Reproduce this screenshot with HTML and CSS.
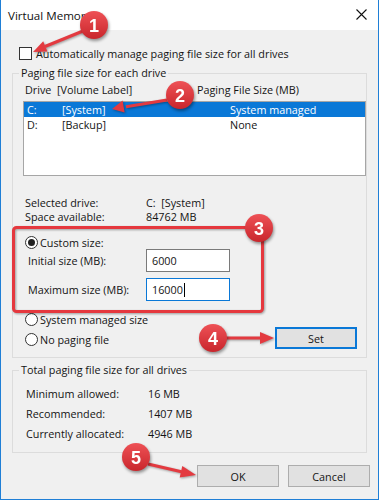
FILE: index.html
```html
<!DOCTYPE html>
<html>
<head>
<meta charset="utf-8">
<link rel="stylesheet" href="styles.css">
</head>
<body>
<div class="window">
  <div class="titlebar">
    <span class="title">Virtual Memory</span>
    <svg class="close" width="11" height="11" viewBox="0 0 11 11"><path d="M0.5 0.5 L10.5 10.5 M10.5 0.5 L0.5 10.5" stroke="#111" stroke-width="1.1" fill="none"/></svg>
  </div>
  <div class="client">
    <div class="check-row"><span class="checkbox"></span><span>Automatically manage paging file size for all drives</span></div>

    <fieldset class="group group-drives">
      <legend>Paging file size for each drive</legend>
      <div class="list-head"><span class="h-drive">Drive</span><span class="h-label">[Volume Label]</span><span>Paging File Size (MB)</span></div>
      <div class="listbox">
        <div class="row selected"><span class="c-drive">C:</span><span class="c-label">[System]</span><span>System managed</span></div>
        <div class="row"><span class="c-drive">D:</span><span class="c-label">[Backup]</span><span>None</span></div>
      </div>
      <div class="info">
        <div class="kv"><span class="k">Selected drive:</span><span>C:&nbsp; [System]</span></div>
        <div class="kv"><span class="k">Space available:</span><span>84762 MB</span></div>
      </div>
      <div class="radio-row custom"><span class="radio checked"></span><span>Custom size:</span></div>
      <div class="field-row"><span class="field-label">Initial size (MB):</span><div class="input">6000</div></div>
      <div class="field-row second"><span class="field-label">Maximum size (MB):</span><div class="input focused">16000<span class="caret"></span></div></div>
      <div class="bottom-row">
        <div class="radios">
          <div class="radio-row"><span class="radio"></span><span>System managed size</span></div>
          <div class="radio-row"><span class="radio"></span><span>No paging file</span></div>
        </div>
        <div class="btn btn-set">Set</div>
      </div>
    </fieldset>

    <fieldset class="group group-total">
      <legend>Total paging file size for all drives</legend>
      <div class="totals">
        <div class="trow"><span class="k">Minimum allowed:</span><span>16 MB</span></div>
        <div class="trow"><span class="k">Recommended:</span><span>1407 MB</span></div>
        <div class="trow"><span class="k">Currently allocated:</span><span>4946 MB</span></div>
      </div>
    </fieldset>

    <div class="buttons">
      <div class="btn">OK</div>
      <div class="btn">Cancel</div>
    </div>
  </div>

  <svg class="annotations" width="379" height="500" viewBox="0 0 379 500">
    <defs>
      <linearGradient id="bg" x1="0" y1="0" x2="0" y2="1">
        <stop offset="0" stop-color="#ee5156"/>
        <stop offset="1" stop-color="#c9262c"/>
      </linearGradient>
    </defs>
    <g class="marks">
      <rect x="13.5" y="227.5" width="249" height="84" rx="3" fill="none" stroke="#e5383e" stroke-width="3"/>
      <line x1="83" y1="31" x2="45" y2="46.5" stroke="#e33a40" stroke-width="3"/>
      <line x1="167" y1="100" x2="126" y2="106.8" stroke="#e33a40" stroke-width="3"/>
      <line x1="224" y1="338" x2="260" y2="338" stroke="#e33a40" stroke-width="3"/>
      <line x1="148" y1="464" x2="182.5" y2="472" stroke="#e33a40" stroke-width="3"/>
      <polygon points="33,52 43.2,41.3 47.4,51.5" fill="#e33a40"/>
      <polygon points="112,109 122.6,100.6 124.6,112.4" fill="#e33a40"/>
      <polygon points="274,338 260,332 260,344" fill="#e33a40"/>
      <polygon points="196,475 182.3,466 179.7,477.6" fill="#e33a40"/>
    </g>
    <g class="badges">
      <circle cx="94" cy="25" r="14" fill="url(#bg)"/>
      <text x="94" y="31.5" class="badge-num">1</text>
      <circle cx="180" cy="95" r="14" fill="url(#bg)"/>
      <text x="180" y="101.5" class="badge-num">2</text>
      <circle cx="259" cy="228" r="14" fill="url(#bg)"/>
      <text x="259" y="234.5" class="badge-num">3</text>
      <circle cx="213" cy="338" r="14" fill="url(#bg)"/>
      <text x="213" y="344.5" class="badge-num">4</text>
      <circle cx="136" cy="457" r="14" fill="url(#bg)"/>
      <text x="136" y="463.5" class="badge-num">5</text>
    </g>
  </svg>
</div>
</body>
</html>
```

FILE: styles.css
```css
html, body {
  margin: 0;
  padding: 0;
  background: #ffffff;
}

body {
  font-family: "Open Sans", "Noto Sans", sans-serif;
  font-size: 10.8px;
  color: #141414;
}

.window {
  position: relative;
  width: 379px;
  height: 500px;
  box-sizing: border-box;
  border: 1px solid #1f7fd6;
  border-top: none;
  background: #f0f0f0;
  overflow: hidden;
}

.titlebar {
  height: 30px;
  background: #ffffff;
  display: flex;
  align-items: center;
  justify-content: space-between;
  padding: 0 11px 0 7px;
}

.title {
  font-size: 11.6px;
  color: #111;
}

.close {
  display: block;
  margin-top: -1px;
}

.client {
  height: 469px;
  background: #f0f0f0;
  overflow: hidden;
}

.check-row {
  display: flex;
  align-items: center;
  height: 14px;
  margin-top: 16px;
  padding-left: 18px;
  gap: 4px;
  white-space: nowrap;
}

.checkbox {
  width: 11px;
  height: 11px;
  border: 1px solid #333;
  background: #fff;
  flex: none;
}

.group {
  margin: 0 11px 0 11px;
  padding: 0;
  border: 1px solid #dcdcdc;
  min-inline-size: 0;
}

.group legend {
  margin-left: 6px;
  padding: 0 2px;
  line-height: 14px;
  height: 14px;
}

.group-drives {
  margin-top: 6px;
  padding-bottom: 8px;
}

.list-head {
  display: flex;
  height: 14px;
  line-height: 14px;
  margin-top: 3px;
  padding-left: 12px;
  white-space: nowrap;
}

.h-drive { width: 32px; }
.h-label { width: 140px; }

.listbox {
  margin: 4px 0 0 10px;
  height: 75px;
  box-sizing: border-box;
  border: 1px solid #a6a6a6;
  background: #fff;
}

.row {
  display: flex;
  height: 15px;
  line-height: 15px;
  padding-left: 3px;
  white-space: nowrap;
}

.row.selected {
  background: #0a78d7;
  color: #fff;
}

.c-drive { width: 35px; }
.c-label { width: 168px; }

.info {
  margin-top: 20px;
}

.kv {
  display: flex;
  height: 14px;
  line-height: 14px;
  padding-left: 12px;
}

.kv .k { width: 121px; }

.radio-row {
  display: flex;
  align-items: center;
  gap: 2px;
  height: 20px;
  padding-left: 12px;
  white-space: nowrap;
}

.radio-row.custom {
  height: 14px;
  margin-top: 11px;
}

.radio {
  width: 11px;
  height: 11px;
  border: 1px solid #333;
  border-radius: 50%;
  background: #fff;
  flex: none;
  position: relative;
}

.radio.checked::after {
  content: "";
  position: absolute;
  left: 2px;
  top: 2px;
  width: 7px;
  height: 7px;
  border-radius: 50%;
  background: #222;
}

.field-row {
  display: flex;
  align-items: center;
  height: 23px;
  padding-left: 15px;
}

.field-row.second {
  margin-top: 6px;
}

.field-label {
  width: 118px;
}

.input {
  width: 84px;
  height: 23px;
  box-sizing: border-box;
  border: 1px solid #7a7a7a;
  background: #fff;
  padding-left: 5px;
  display: flex;
  align-items: center;
}

.input.focused {
  border-color: #0a78d7;
}

.caret {
  display: inline-block;
  width: 1px;
  height: 14px;
  background: #000;
  margin-left: 1px;
}

.bottom-row {
  display: flex;
  justify-content: space-between;
  align-items: flex-end;
  height: 41px;
  margin-top: 7px;
}

.radios {
  display: flex;
  flex-direction: column;
}

.btn {
  width: 82px;
  height: 22px;
  box-sizing: border-box;
  border: 1px solid #adadad;
  background: #e1e1e1;
  display: flex;
  align-items: center;
  justify-content: center;
}

.btn-set {
  border: 2px solid #0a78d7;
  margin-right: 9px;
}

.group-total {
  margin-top: 5px;
  padding-bottom: 9px;
}

.totals {
  margin-top: 6px;
}

.trow {
  display: flex;
  align-items: center;
  height: 20px;
  padding-left: 13px;
}

.trow .k { width: 122px; }

.buttons {
  display: flex;
  justify-content: flex-end;
  gap: 9px;
  margin-top: 12px;
  padding-right: 8px;
}

.annotations {
  position: absolute;
  left: -1px;
  top: 0;
  pointer-events: none;
}

.marks {
  filter: drop-shadow(1px 1px 1px rgba(0, 0, 0, 0.35));
}

.badges {
  filter: drop-shadow(1px 2px 1.5px rgba(0, 0, 0, 0.4));
}

.badge-num {
  font-family: "Liberation Sans", Arial, sans-serif;
  font-weight: bold;
  font-size: 18px;
  fill: #fff;
  text-anchor: middle;
}
```
